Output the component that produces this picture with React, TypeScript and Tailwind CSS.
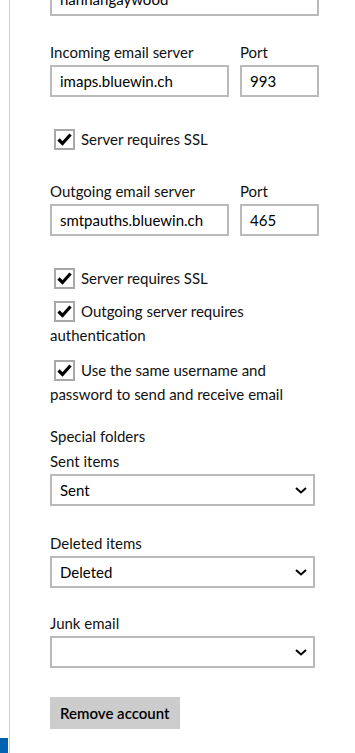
const font = { fontFamily: "Lato, 'Noto Sans', 'Liberation Sans', sans-serif" };

function Check({ className = "" }: { className?: string }) {
  return (
    <span
      className={`inline-flex h-[21px] w-[21px] shrink-0 items-center justify-center border-2 border-[#a8a8a8] bg-white align-middle ${className}`}
    >
      <svg width="15" height="13" viewBox="0 0 15 13">
        <polyline points="1.5,6.5 5.5,10.5 13.5,1.5" fill="none" stroke="#000" strokeWidth="3.2" />
      </svg>
    </span>
  );
}

function TextBox({ value, className = "" }: { value: string; className?: string }) {
  return (
    <div className={`flex h-[32px] items-center border-2 border-[#bababa] bg-white pl-[8px] text-[15px] text-black ${className}`}>
      {value}
    </div>
  );
}

function Select({ value, className = "" }: { value: string; className?: string }) {
  return (
    <div
      className={`flex h-[32px] w-[265px] items-center justify-between border-2 border-[#bababa] bg-white pl-[8px] pr-[6px] text-[15px] text-black ${className}`}
    >
      <span>{value}</span>
      <svg width="12" height="7" viewBox="0 0 12 7">
        <polyline points="1,1 6,5.5 11,1" fill="none" stroke="#000" strokeWidth="2" />
      </svg>
    </div>
  );
}

function Label({ children, className = "" }: { children: React.ReactNode; className?: string }) {
  return <div className={`h-[20px] text-[15px] leading-[20px] text-[#111] ${className}`}>{children}</div>;
}

export default function App() {
  return (
    <div className="flex h-[753px] w-[355px] overflow-hidden bg-white" style={font}>
      <div className="flex w-[9px] flex-col justify-end">
        <div className="h-[15px] w-[8px] bg-[#0063b1]" />
      </div>
      <div className="flex-1 border-l border-[#cfcfcf] pl-[40px]">
        <TextBox value="hannahgaywood" className="mt-[-16px] w-[269px] items-start pt-[2px]" />

        <div className="mt-[26px] flex gap-[11px]">
          <div className="w-[179px]">
            <Label>Incoming email server</Label>
            <TextBox value="imaps.bluewin.ch" className="mt-[3px]" />
          </div>
          <div className="w-[79px]">
            <Label>Port</Label>
            <TextBox value="993" className="mt-[3px]" />
          </div>
        </div>

        <div className="mt-[32px] flex h-[21px] items-center text-[15px] text-[#111]">
          <Check className="ml-[4px] mr-[6px]" />
          <span>Server requires SSL</span>
        </div>

        <div className="mt-[31px] flex gap-[11px]">
          <div className="w-[179px]">
            <Label>Outgoing email server</Label>
            <TextBox value="smtpauths.bluewin.ch" className="mt-[3px]" />
          </div>
          <div className="w-[79px]">
            <Label>Port</Label>
            <TextBox value="465" className="mt-[3px]" />
          </div>
        </div>

        <div className="mt-[32px] flex h-[21px] items-center text-[15px] text-[#111]">
          <Check className="ml-[4px] mr-[6px]" />
          <span>Server requires SSL</span>
        </div>

        <p className="mt-[10px] w-[250px] text-[15px] leading-[24px] text-[#111]">
          <Check className="ml-[4px] mr-[6px] -mt-[3px]" />
          Outgoing server requires authentication
        </p>

        <p className="mt-[11px] w-[260px] text-[15px] leading-[24px] text-[#111]">
          <Check className="ml-[4px] mr-[6px] -mt-[3px]" />
          Use the same username and password to send and receive email
        </p>

        <Label className="mt-[20px]">Special folders</Label>
        <Label className="mt-[5px]">Sent items</Label>
        <Select value="Sent" className="mt-[3px]" />

        <Label className="mt-[27px]">Deleted items</Label>
        <Select value="Deleted" className="mt-[3px]" />

        <Label className="mt-[25px]">Junk email</Label>
        <Select value="" className="mt-[3px]" />

        <button className="mt-[29px] h-[32px] bg-[#cccccc] px-[10px] text-[15px] font-semibold text-black" style={font}>
          Remove account
        </button>
      </div>
    </div>
  );
}
